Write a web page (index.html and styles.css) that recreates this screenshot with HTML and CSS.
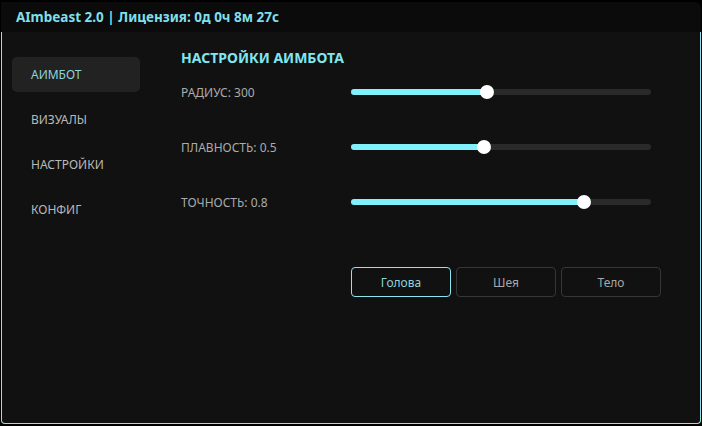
FILE: index.html
```html
<!DOCTYPE html>
<html lang="ru">
<head>
  <meta charset="UTF-8">
  <meta name="viewport" content="width=device-width, initial-scale=1.0">
  <title>AImbeast 2.0</title>
  <link rel="stylesheet" href="styles.css">
</head>
<body>
  <div class="okno">
    <div class="zagolovok">AImbeast 2.0 | Лицензия: 0д 0ч 8м 27с</div>

    <div class="telo">
      <div class="menu">
        <div class="punkt aktivnyj">АИМБОТ</div>
        <div class="punkt">ВИЗУАЛЫ</div>
        <div class="punkt">НАСТРОЙКИ</div>
        <div class="punkt">КОНФИГ</div>
      </div>

      <div class="panel">
        <div class="razdel">НАСТРОЙКИ АИМБОТА</div>

        <div class="stroka">
          <div class="metka">РАДИУС: 300</div>
          <div class="polzunok">
            <div class="zalivka" style="width: 136px"></div>
            <div class="ruchka" style="left: 136px"></div>
          </div>
        </div>

        <div class="stroka">
          <div class="metka">ПЛАВНОСТЬ: 0.5</div>
          <div class="polzunok">
            <div class="zalivka" style="width: 133px"></div>
            <div class="ruchka" style="left: 133px"></div>
          </div>
        </div>

        <div class="stroka">
          <div class="metka">ТОЧНОСТЬ: 0.8</div>
          <div class="polzunok">
            <div class="zalivka" style="width: 233px"></div>
            <div class="ruchka" style="left: 233px"></div>
          </div>
        </div>

        <div class="knopki">
          <button class="cel vybrana">Голова</button>
          <button class="cel">Шея</button>
          <button class="cel">Тело</button>
        </div>
      </div>
    </div>
  </div>
</body>
</html>
```

FILE: styles.css
```css
body {
  margin: 0;
  background: #000;
  font-family: "Noto Sans", "Open Sans", sans-serif;
}
.okno {
  margin: 2px 1px 0 1px;
  width: 700px;
  height: 422px;
  display: flex;
  flex-direction: column;
}
.zagolovok {
  height: 30px;
  line-height: 31px;
  padding-left: 15px;
  background: #0b0b0b;
  border-radius: 0 6px 0 0;
  color: #7fdfea;
  font-weight: bold;
  font-size: 13.5px;
}
.telo {
  flex: 1;
  display: flex;
  background: #111;
  border: 1px solid #8fe4ec;
  border-top: none;
  border-radius: 0 0 4px 4px;
}
.menu {
  width: 128px;
  padding: 25px 41px 0 10px;
  display: flex;
  flex-direction: column;
  gap: 10px;
}
.punkt {
  height: 35px;
  line-height: 35px;
  padding-left: 19px;
  border-radius: 5px;
  font-size: 12px;
  color: #b9b9b9;
}
.punkt.aktivnyj { background: #222; color: #8fd3da; }
.panel {
  padding-top: 17px;
  display: flex;
  flex-direction: column;
  gap: 35px;
}
.razdel {
  height: 18px;
  line-height: 18px;
  margin-bottom: -20px;
  color: #80e6f0;
  font-weight: bold;
  font-size: 14px;
}
.stroka { display: flex; align-items: center; height: 20px; }
.metka { width: 170px; font-size: 12px; color: #ababab; }
.polzunok {
  position: relative;
  width: 300px;
  height: 6px;
  border-radius: 3px;
  background: #2a2a2a;
}
.zalivka { height: 100%; border-radius: 3px; background: #80f1fa; }
.ruchka {
  position: absolute;
  top: -4px;
  width: 14px;
  height: 14px;
  margin-left: -7px;
  border-radius: 50%;
  background: #fff;
}
.knopki { display: flex; gap: 5px; margin-top: 20px; margin-left: 170px; }
.cel {
  width: 100px;
  height: 30px;
  padding: 0;
  background: #111;
  border: 1px solid #363636;
  border-radius: 4px;
  font-family: inherit;
  font-size: 12px;
  color: #a8a8a8;
}
.cel.vybrana { border-color: #8fe4ec; color: #8fd3da; }
```
